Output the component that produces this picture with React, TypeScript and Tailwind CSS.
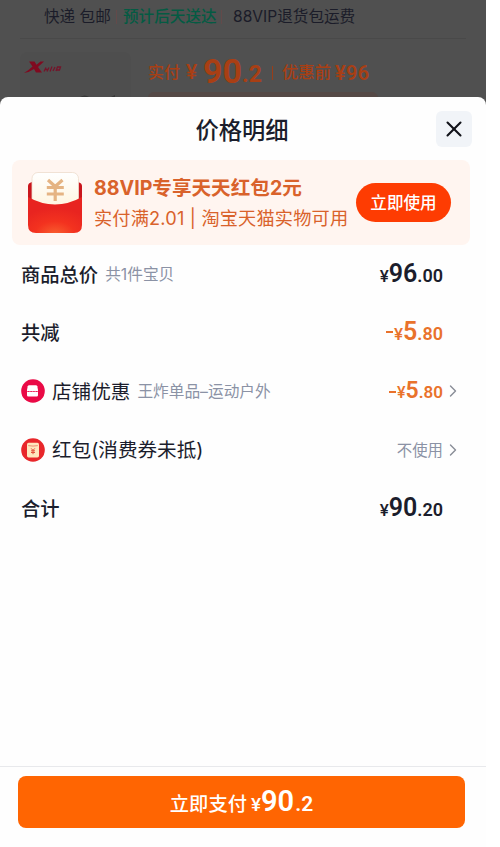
import React from 'react';
import { ChevronRight, X } from 'lucide-react';

type PriceProps = {
  prefix: string;
  whole: string;
  fraction: string;
  size?: 'md' | 'sm';
  className?: string;
};

const Price: React.FC<PriceProps> = ({ prefix, whole, fraction, size = 'md', className = '' }) => (
  <span className={`flex items-baseline font-['Roboto',sans-serif] font-semibold leading-none ${size === 'md' ? 'pb-0.5' : 'pt-0.5'} ${className}`}>
    {prefix.startsWith('-') && <span className="mr-px w-[7px] h-0.5 self-center bg-current" />}
    <span className={`font-medium ${size === 'md' ? 'text-[17px]' : 'text-base'}`}>{prefix.replace('-', '')}</span>
    <span className={size === 'md' ? 'text-[25px]' : 'text-[23px]'}>{whole}</span>
    <span className={size === 'md' ? 'text-[18px]' : 'text-[17px]'}>{fraction}</span>
  </span>
);

const ShopIcon = () => (
  <svg className="w-6 h-6 shrink-0" viewBox="0 0 24 24">
    <circle cx="12" cy="12" r="11.8" fill="#ea0a46" />
    <path d="M8.2 6.2h6.6q1.2 0 1.5 1l.7 3.8v1H6v-1l.7-3.8q.3-1 1.5-1z" fill="#fff" />
    <path d="M6 12.6q1.4.9 2.8 0 1.4.9 2.8 0 1.3.9 2.7 0 1.4.9 2.7 0v3.6q0 1.3-1.3 1.3H7.3Q6 17.5 6 16.2z" fill="#fff" />
  </svg>
);

const PacketIcon = () => (
  <svg className="w-6 h-6 shrink-0" viewBox="0 0 24 24">
    <circle cx="12" cy="12" r="11.8" fill="#e8262a" />
    <rect x="6" y="4.8" width="12" height="14.6" rx="1.6" fill="#ffe6bd" />
    <path d="M7.2 7.6q4.8 1 9.6 0" fill="none" stroke="#e6866a" strokeWidth=".9" />
    <path d="M10.2 10.4l1.8 2 1.8-2M10 12.8h4M10 14.5h4M12 12.4v3.8" fill="none" stroke="#e2503c" strokeWidth="1" />
  </svg>
);

const RedEnvelope = () => (
  <svg className="w-[54px] h-[62px] shrink-0" viewBox="0 0 54 62">
    <defs>
      <linearGradient id="card" x1="0" y1="0" x2="0" y2="1">
        <stop offset="0" stopColor="#ffffff" />
        <stop offset="1" stopColor="#fff3d8" />
      </linearGradient>
      <radialGradient id="pocket" cx=".5" cy="1.05" r=".75">
        <stop offset="0" stopColor="#f9602f" />
        <stop offset=".5" stopColor="#f3321f" />
        <stop offset="1" stopColor="#e82420" />
      </radialGradient>
    </defs>
    <path d="M0 14q0-3 4-4h46q4 1 4 4v20H0z" fill="#c9151c" />
    <rect x="4" y=".5" width="46.5" height="42" rx="6" fill="url(#card)" stroke="#eedccb" strokeWidth=".8" />
    <path d="M0 25q27 15 54 0v28q0 8-8 8H8q-8 0-8-8z" fill="url(#pocket)" />
    <path d="M20 8l7.2 6.5L34.5 8M18.8 15.5h17M18.8 22h17M27.2 15v14" fill="none" stroke="#e5b483" strokeWidth="3.2" />
  </svg>
);

const OrderBackdrop = () => (
  <div className="h-[97px] overflow-hidden">
    <div className="flex items-center h-[33px] pl-11 text-[15.6px] text-[#1b1c29] whitespace-nowrap">
      <span className="w-[72px] shrink-0">快递 包邮</span>
      <span className="w-px h-3.5 shrink-0 bg-[#634a4a]" />
      <span className="ml-1.5 w-[98px] shrink-0 font-medium text-[#045b43]">预计后天送达</span>
      <span className="w-px h-3.5 shrink-0 bg-[#634a4a]" />
      <span className="ml-[11px]">88VIP退货包运费</span>
    </div>
    <div className="mx-5 mt-[5px] h-px bg-[#494949]" />
    <div className="flex pl-5">
      <div className="mt-[13px] w-[111px] h-[60px] rounded-t-lg bg-[#4e4e4e]">
        <svg className="w-full h-full" viewBox="0 0 111 60">
          <path d="M9 9.5h5.5l2 3.2 4-3.2H24l-6 5.5 4 5.5h-6L14 17l-5.500 3-4.500 1q5-3 8.500-6.500z" fill="#800a20" />
          <path d="M24 19.5l2-4M27 19.500l2-4M25 17.500h3M30 19.500l2-5M33 19l2-4M36 19l1.500-4h3l-1 3h-3" fill="none" stroke="#74142a" strokeWidth="1.3" />
          <path d="M60 45q5-3 9 0zM91 45l4-2v2z" fill="#373737" />
        </svg>
      </div>
      <div className="mt-2.5 ml-[17px] w-[230px]">
        <div className="flex items-center h-[43px] whitespace-nowrap text-[#a93f14] font-medium leading-none">
          <span className="text-[16px] pt-[3px]">实付</span>
          <span className="ml-1.5 w-3.5 pt-1 text-[21px] font-['Roboto',sans-serif]">¥</span>
          <span className="ml-[3px] text-[34px] font-['Roboto',sans-serif] font-bold">90</span>
          <span className="pt-[7px] text-[23px] font-['Roboto',sans-serif] font-bold">.2</span>
          <span className="ml-2.5 mt-1 w-px h-3.5 shrink-0 bg-[#983e19]" />
          <span className="ml-[9px] pt-[3px] text-[16.4px]">优惠前</span>
          <span className="ml-1 pt-1 text-[20px] tracking-[0.3px] font-['Roboto',sans-serif] font-semibold">¥96</span>
        </div>
        <div className="h-4 rounded-t-md bg-[#554946]" />
      </div>
    </div>
  </div>
);

const Header = () => (
  <div className="relative flex items-center justify-center h-[63px] pt-1 pr-0.5">
    <h2 className="text-[23.3px] font-medium leading-none">价格明细</h2>
    <button className="absolute right-3.5 top-3.5 flex items-center justify-center w-9 h-9 rounded-md bg-[#f1f4f8]">
      <X size={26} strokeWidth={1.9} className="text-[#111219]" />
    </button>
  </div>
);

const CouponBanner = () => (
  <div className="flex items-center ml-3 w-[458px] h-[85px] pl-4 rounded-lg bg-[#fff5f0] whitespace-nowrap">
    <RedEnvelope />
    <div className="ml-3 w-[262px] text-[#d9622b]">
      <p className="text-[19.6px] font-bold leading-[30px]">88VIP专享天天红包2元</p>
      <p className="text-[18.2px] leading-[30px] tracking-[0.18px]">实付满2.01 | 淘宝天猫实物可用</p>
    </div>
    <button className="w-[95px] h-[39px] pt-px rounded-full bg-[#fe3c02] text-white text-[16.6px] font-medium">
      立即使用
    </button>
  </div>
);

type RowProps = {
  label: string;
  note?: string;
  icon?: React.ReactNode;
  arrow?: boolean;
  children: React.ReactNode;
};

const DetailRow: React.FC<RowProps> = ({ label, note, icon, arrow, children }) => (
  <div className="flex items-center h-[58.5px] pl-[21px] whitespace-nowrap">
    {icon}
    <span className={icon ? 'pt-0.5 ml-[7px] text-[19.6px]' : 'pt-0.5 text-[19.3px] font-medium'}>{label}</span>
    {note && <span className="ml-[7px] pt-0.5 text-[15.7px] text-[#8b92a5]">{note}</span>}
    <span className="ml-auto">{children}</span>
    <span className="w-[43px] flex items-center">
      {arrow && <ChevronRight size={20} strokeWidth={1.7} className="text-[#8a8e98]" />}
    </span>
  </div>
);

const App: React.FC = () => (
  <div className="w-[500px] h-[847px] bg-white overflow-hidden font-['Inter','Noto_Sans_CJK_SC',sans-serif] text-[#1b1d2c]">
    <div className="flex flex-col w-[486px] h-full bg-[#505050]">
      <OrderBackdrop />
      <div className="flex flex-col flex-1 rounded-t-lg bg-[#fefefe]">
        <Header />
        <CouponBanner />
        <DetailRow label="商品总价" note="共1件宝贝">
          <Price prefix="¥" whole="96" fraction=".00" />
        </DetailRow>
        <DetailRow label="共减">
          <Price prefix="-¥" whole="5" fraction=".80" className="text-[#e9722b]" />
        </DetailRow>
        <DetailRow label="店铺优惠" note="王炸单品–运动户外" icon={<ShopIcon />} arrow>
          <Price prefix="-¥" whole="5" fraction=".80" size="sm" className="text-[#e9722b]" />
        </DetailRow>
        <DetailRow label="红包(消费券未抵)" icon={<PacketIcon />} arrow>
          <span className="text-[15.4px] text-[#8b92a5]">不使用</span>
        </DetailRow>
        <DetailRow label="合计">
          <Price prefix="¥" whole="90" fraction=".20" />
        </DetailRow>
        <div className="mt-auto h-[81px] pt-[9px] pl-[18px] border-t border-[#e8e9ec]">
          <button className="flex items-baseline justify-center w-[447px] h-[52px] rounded-lg bg-[#ff6502] text-white text-[19.3px] font-medium leading-[51px]">
            立即支付
            <span className="ml-1 text-[19px] font-['Roboto',sans-serif]">¥</span>
            <span className="text-[29px] font-['Roboto',sans-serif] font-semibold">90</span>
            <span className="ml-px text-[21px] font-['Roboto',sans-serif] font-semibold">.2</span>
          </button>
        </div>
      </div>
    </div>
  </div>
);

export default App;
